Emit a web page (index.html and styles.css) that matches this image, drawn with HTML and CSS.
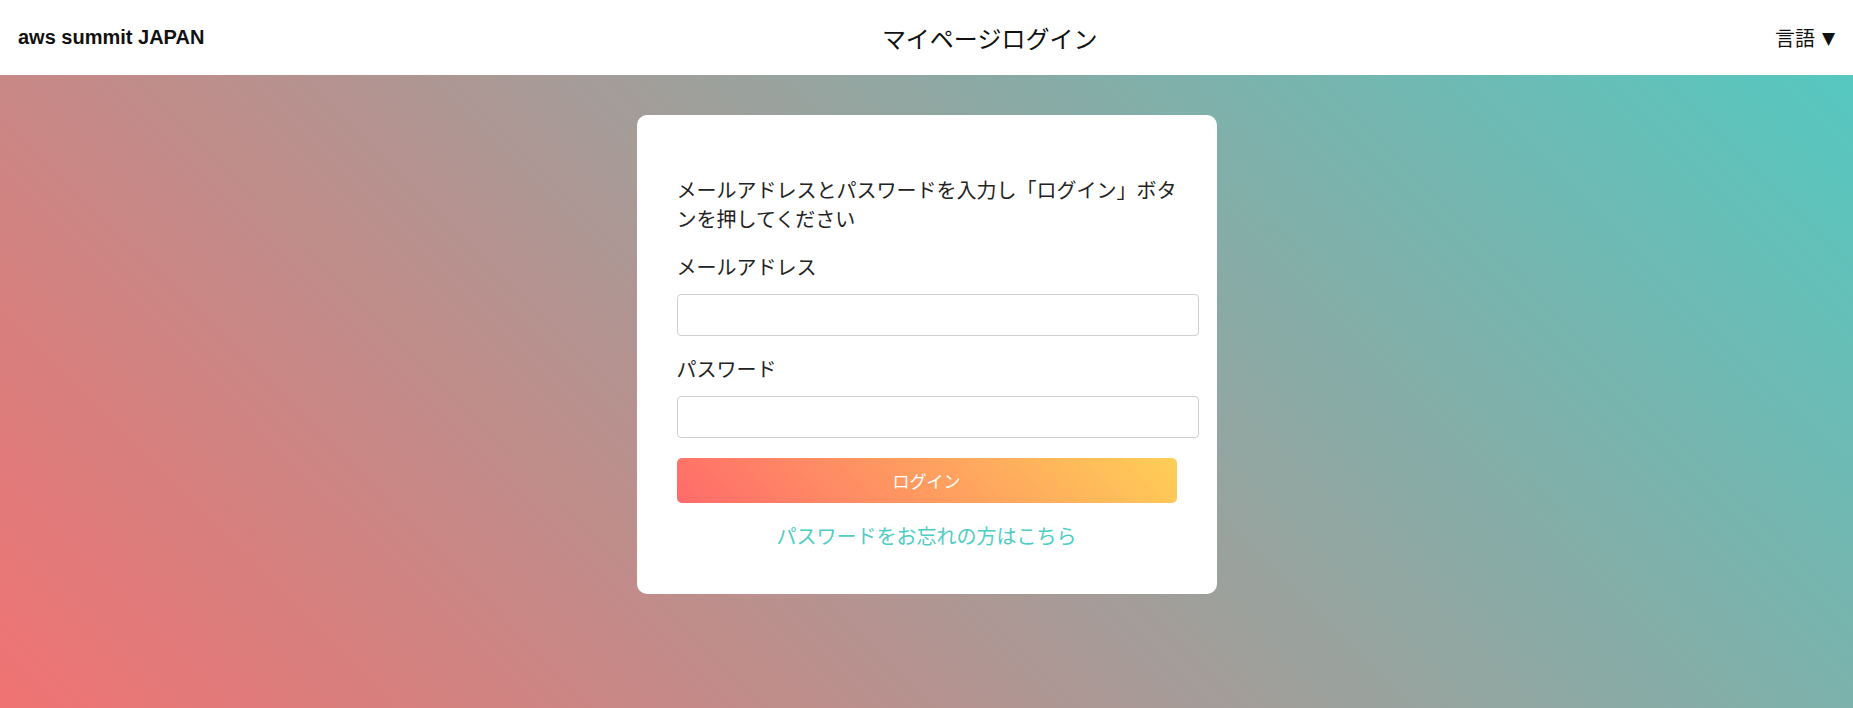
FILE: index.html
```html
<!DOCTYPE html>
<html lang="ja">
<head>
<meta charset="utf-8">
<title>マイページログイン</title>
<link rel="stylesheet" href="styles.css">
</head>
<body>
<header class="topbar">
  <div class="brand">aws summit JAPAN</div>
  <div class="page-title">マイページログイン</div>
  <div class="lang">言語 <span class="caret">▼</span></div>
</header>
<main class="hero">
  <section class="card">
    <p class="intro">メールアドレスとパスワードを入力し「ログイン」ボタンを押してください</p>
    <label class="field-label" for="email">メールアドレス</label>
    <input class="field" id="email" type="email">
    <label class="field-label" for="password">パスワード</label>
    <input class="field" id="password" type="password">
    <div class="actions">
      <button class="login-btn" type="button">ログイン</button>
      <a class="forgot" href="#">パスワードをお忘れの方はこちら</a>
    </div>
  </section>
</main>
</body>
</html>
```
FILE: styles.css
```css
html, body {
  margin: 0;
  padding: 0;
}
body {
  font-family: "Liberation Sans", "Noto Sans CJK JP", sans-serif;
  color: #222;
  background: #fff;
}
.topbar {
  height: 75px;
  box-sizing: border-box;
  padding: 0 18px;
  display: flex;
  align-items: center;
  justify-content: space-between;
  background: #fff;
}
.brand {
  font-weight: bold;
  font-size: 20px;
  color: #111;
}
.page-title {
  font-family: "Noto Sans CJK JP", sans-serif;
  font-size: 24px;
  line-height: 30px;
  color: #111;
}
.lang {
  font-family: "Noto Sans CJK JP", sans-serif;
  font-size: 20px;
  color: #111;
  display: flex;
  align-items: center;
  gap: 7px;
}
.caret {
  font-family: "DejaVu Sans", sans-serif;
  font-size: 17px;
}
.hero {
  min-height: calc(100vh - 75px);
  box-sizing: border-box;
  padding-top: 40px;
  background: linear-gradient(45deg, #f07272, #55c8c0);
  display: flex;
  justify-content: center;
  align-items: flex-start;
}
.card {
  width: 580px;
  box-sizing: border-box;
  padding: 60px 40px 44px 40px;
  background: #fff;
  border-radius: 10px;
  display: flex;
  flex-direction: column;
  font-family: "Noto Sans CJK JP", sans-serif;
}
.intro {
  margin: 0;
  font-size: 20px;
  line-height: 29px;
  color: #222;
}
.field-label {
  display: block;
  margin-top: 20px;
  font-size: 20px;
  line-height: 28px;
  color: #222;
}
.field {
  margin-top: 13px;
  width: 100%;
  height: 40px;
  box-sizing: content-box;
  border: 1px solid #cfcfcf;
  border-radius: 4px;
  background: #fff;
  padding: 0 10px;
  font-size: 16px;
}
.field + .field-label {
  margin-top: 19px;
}
.actions {
  width: 100%;
  display: flex;
  flex-direction: column;
  align-items: center;
  margin-top: 20px;
}
.login-btn {
  width: 100%;
  height: 45px;
  border: none;
  border-radius: 5px;
  background: linear-gradient(45deg, #ff6b6b, #ffcf56);
  color: #fff;
  font-family: "Noto Sans CJK JP", sans-serif;
  font-size: 17px;
  cursor: pointer;
}
.forgot {
  margin-top: 19px;
  font-size: 20px;
  line-height: 28px;
  color: #4ecdc4;
  text-decoration: none;
}
```
